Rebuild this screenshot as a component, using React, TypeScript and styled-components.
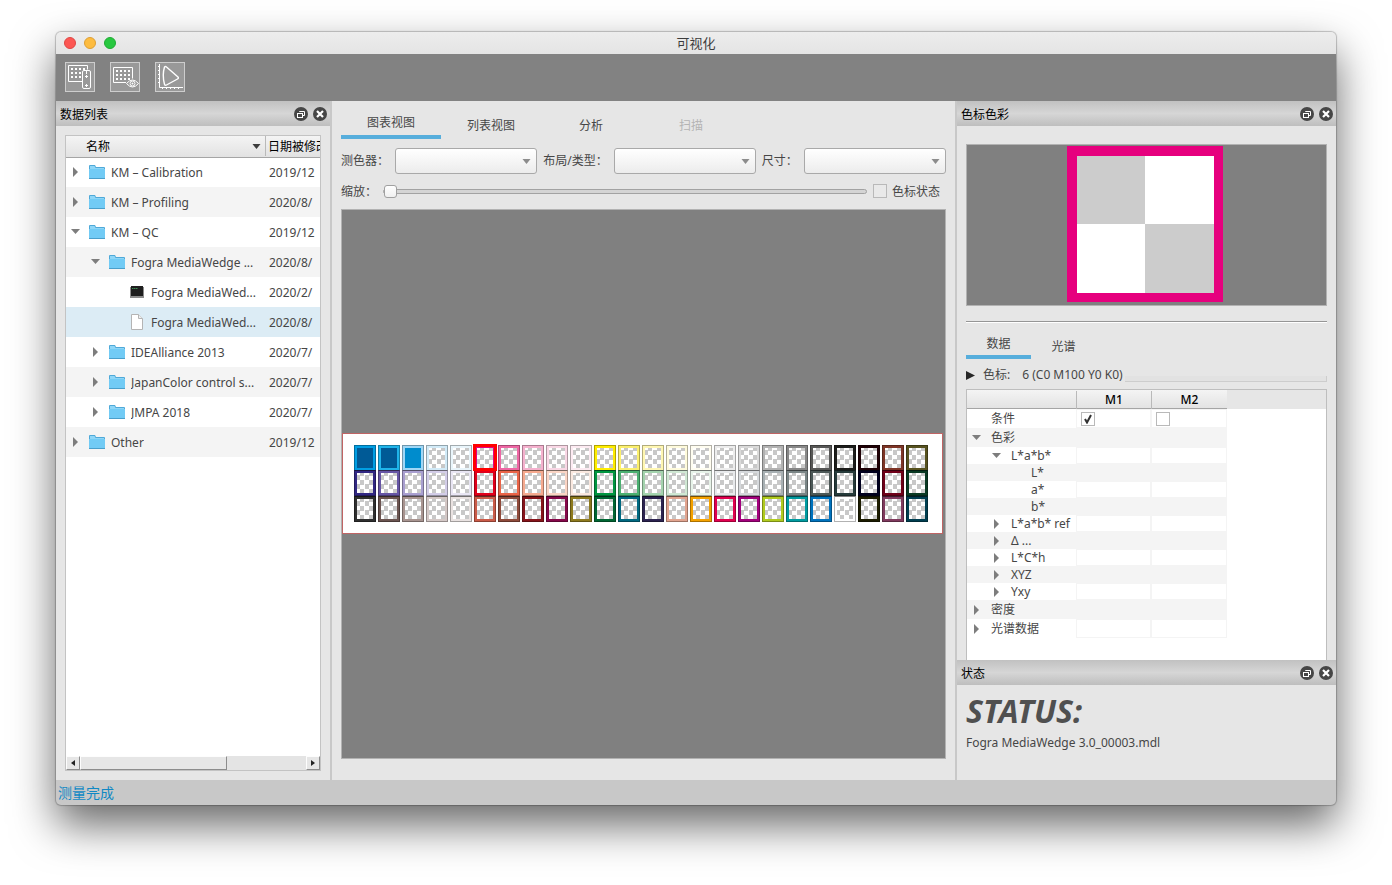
import React from 'react';
import styled, { createGlobalStyle, css } from 'styled-components';

const GlobalStyle = createGlobalStyle`
  * { box-sizing: border-box; }
  html, body { margin: 0; background: #fff; }
  body, button, select, input {
    font-family: "Noto Sans", "Noto Sans CJK SC", sans-serif;
    font-size: 12px;
    line-height: 16px;
    color: #464646;
  }
  button { padding: 0; border: 0; background: none; }
`;

const Page = styled.div`
  display: flex;
  min-height: 100vh;
  padding: 32px 56px 80px;
  overflow: hidden;
`;

const Window = styled.main`
  flex: 1;
  min-width: 0;
  display: flex;
  flex-direction: column;
  border-radius: 5px;
  background: #c8c8c8;
  box-shadow: 0 0 1px 1px rgba(0, 0, 0, 0.22), 0 20px 44px rgba(0, 0, 0, 0.6);
`;

const TitleBar = styled.header`
  display: grid;
  grid-template-columns: 1fr auto 1fr;
  align-items: center;
  height: 22px;
  padding: 0 8px;
  border-radius: 5px 5px 0 0;
  background: linear-gradient(#ededed, #e4e4e4);
`;

const Lights = styled.div`
  display: flex;
  gap: 8px;
`;

const Light = styled.button<{ $color: string; $edge: string }>`
  width: 12px;
  height: 12px;
  border: 1px solid ${(p) => p.$edge};
  border-radius: 50%;
  background: ${(p) => p.$color};
`;

const WindowTitle = styled.h1`
  margin: 0;
  font-size: 13px;
  line-height: 18px;
  font-weight: 400;
  color: #3c3c3c;
`;

const Toolbar = styled.nav`
  display: flex;
  gap: 15px;
  align-items: center;
  height: 47px;
  padding: 0 9px 2px;
  background: #828282;
`;

const ToolButton = styled.button`
  width: 30px;
  height: 30px;
  border: 1px solid #cdcdcd;
  background: #999;
  svg { display: block; }
`;

const Body = styled.div`
  flex: 1;
  display: grid;
  grid-template-columns: 274px minmax(0, 1fr) 379px;
  gap: 2px;
`;

const Column = styled.div`
  display: flex;
  flex-direction: column;
  min-width: 0;
  background: #e6e6e6;
`;

const DockHeader = styled.div`
  display: flex;
  align-items: center;
  gap: 5px;
  height: 25px;
  padding: 0 3px 0 4px;
  background: linear-gradient(#c1c1c1, #d6d6d6 50%, #bebebe);
`;

const DockTitle = styled.h2`
  flex: 1;
  margin: 0;
  padding-top: 2px;
  font-size: 12px;
  line-height: 16px;
  font-weight: 400;
  color: #000;
`;

const DockButton = styled.button`
  width: 14px;
  height: 14px;
  svg { display: block; }
`;

const LeftBody = styled.div`
  flex: 1;
  display: flex;
  padding: 9px;
`;

const TreeFrame = styled.div`
  flex: 1;
  min-width: 0;
  display: flex;
  flex-direction: column;
  border: 1px solid #c3c3c3;
  background: #fff;
`;

const TreeViewport = styled.div`
  flex: 1;
  overflow: hidden;
`;

const TreeTable = styled.table`
  width: 440px;
  table-layout: fixed;
  border-collapse: collapse;
  th, td {
    padding: 0;
    white-space: nowrap;
  }
`;

const TreeHead = styled.th<{ $width?: number }>`
  height: 21px;
  ${(p) => p.$width && `width: ${p.$width}px;`}
  border-bottom: 1px solid #a5a5a5;
  background: linear-gradient(#f4f4f4, #e2e2e2);
  font-weight: 400;
  color: #000;
  text-align: left;
`;

const HeadInner = styled.div<{ $divided?: boolean }>`
  display: flex;
  align-items: center;
  justify-content: space-between;
  height: 20px;
  padding: ${(p) => (p.$divided ? '0 2px' : '0 4px 0 20px')};
  border-left: ${(p) => (p.$divided ? 1 : 0)}px solid #b9b9b9;
  span { padding-top: 2px; }
`;

const TreeRow = styled.tr<{ $selected?: boolean }>`
  height: 30px;
  background: #fff;
  &:nth-child(even) { background: #f4f4f4; }
  ${(p) => p.$selected && css`&&:nth-child(n) { background: #dcecf5; }`}
`;

const NameInner = styled.div<{ $level: number }>`
  display: flex;
  align-items: center;
  gap: 6px;
  padding: 0 4px 0 ${(p) => p.$level * 20 + 3}px;
  svg { flex: none; }
  svg + svg { margin-left: 1px; }
  span {
    padding-top: 2px;
    overflow: hidden;
    text-overflow: ellipsis;
  }
`;

const DateCell = styled.td`
  && { padding: 2px 0 0 4px; }
`;

const ScrollBar = styled.div`
  display: flex;
  height: 14px;
  background: #e4e4e4;
`;

const Bevel = css`
  border: 1px solid;
  border-color: #fdfdfd #8c8c8c #8c8c8c #fdfdfd;
  background: #e6e6e6;
`;

const ScrollButton = styled.button`
  ${Bevel}
  display: grid;
  place-items: center;
  width: 14px;
  height: 14px;
`;

const ScrollTrack = styled.div`
  flex: 1;
`;

const ScrollThumb = styled.div`
  ${Bevel}
  width: 65%;
  height: 14px;
`;

const Center = styled(Column)`
  padding: 0 9px 21px;
`;

const Tabs = styled.div<{ $height: number }>`
  display: flex;
  height: ${(p) => p.$height}px;
`;

const Tab = styled.button<{ $active?: boolean; $width: number }>`
  width: ${(p) => p.$width}px;
  padding-top: ${(p) => (p.$active ? 9 : 11)}px;
  border-bottom: ${(p) => (p.$active ? 4 : 0)}px solid #57aedc;
  color: #464646;
  &:disabled { color: #b4b4b4; }
`;

const FieldRow = styled.div`
  display: flex;
  align-items: center;
  gap: 6px;
  margin-top: 9px;
`;

const SelectBox = styled.div`
  position: relative;
  flex: 1;
  height: 26px;
  svg {
    position: absolute;
    right: 6px;
    top: 11px;
    pointer-events: none;
  }
`;

const Select = styled.select`
  display: block;
  width: 100%;
  height: 26px;
  appearance: none;
  border: 1px solid #a9a9a9;
  border-radius: 3px;
  background: linear-gradient(#fff, #ececec);
`;

const ZoomRow = styled(FieldRow)`
  height: 14px;
  margin: 10px 0 11px;
  padding-right: 6px;
  span { display: block; padding-top: 2px; }
`;

const Slider = styled.input`
  flex: 1;
  min-width: 0;
  height: 14px;
  margin: 0;
  appearance: none;
  background: none;
  &::-webkit-slider-runnable-track {
    height: 5px;
    border: 1px solid #a2a2a2;
    border-radius: 3px;
    background: #d4d4d4;
  }
  &::-webkit-slider-thumb {
    appearance: none;
    width: 13px;
    height: 13px;
    margin-top: -5px;
    border: 1px solid #a0a0a0;
    border-radius: 3px;
    background: linear-gradient(#fff, #f0f0f0);
  }
`;

const CheckLabel = styled.label`
  display: flex;
  align-items: center;
  gap: 5px;
`;

const Check = styled.input<{ $bg?: string }>`
  flex: none;
  width: 14px;
  height: 14px;
  margin: 0;
  appearance: none;
  border: 1px solid #b9b9b9;
  background: ${(p) => p.$bg || '#e9e9e9'};
`;

const Canvas = styled.section`
  flex: 1;
  display: flex;
  align-items: center;
  padding-bottom: 2px;
  border: 1px solid #b2b2b2;
  background: #808080;
`;

const Strip = styled.div`
  padding: 11px 14px 11px 11px;
  border: 1px solid #c06464;
  background: #fff;
`;

const PatchGrid = styled.div`
  display: grid;
  grid-template-columns: repeat(24, 22px);
  grid-template-rows: 25px 26px 26px;
  column-gap: 2px;
`;

const checker = 'repeating-conic-gradient(#fff 0 25%, #c8c8c8 0 50%) 3px -2px / 9px 9px';

const Patch = styled.div<{ $color: string; $fill?: string; $top: boolean; $selected?: boolean }>`
  display: flex;
  padding: 2px;
  border: 1px solid rgba(0, 0, 0, 0.3);
  border-top-color: rgba(0, 0, 0, ${(p) => (p.$top ? 0.3 : 0.5)});
  border-bottom-width: ${(p) => (p.$top ? 0 : 1)}px;
  background: ${(p) => p.$color};
  &::before {
    content: "";
    flex: 1;
    background: ${(p) => p.$fill || checker};
  }
  ${(p) => p.$selected && css`outline: 3px solid #f00; outline-offset: -2px; z-index: 1;`}
`;

const SwatchBody = styled.div`
  flex: 1;
  display: flex;
  flex-direction: column;
  padding: 18px 9px 0;
`;

const Swatch = styled.div`
  display: flex;
  justify-content: center;
  height: 162px;
  padding: 1px;
  border: 1px solid #b2b2b2;
  background: #808080;
`;

const SwatchColor = styled.div`
  width: 156px;
  height: 156px;
  margin-right: 4px;
  border: 10px solid #e6007e;
  border-right-width: 9px;
  border-bottom-width: 9px;
  background: repeating-conic-gradient(#fff 0 25%, #ccc 0 50%) -1px -1px / 138px 138px;
`;

const Divider = styled.hr`
  width: 100%;
  height: 2px;
  margin: 15px 0 0;
  border: 0;
  border-top: 1px solid #969696;
  border-bottom: 1px solid #fff;
`;

const PatchInfo = styled.div`
  display: flex;
  align-items: center;
  height: 30px;
  padding-top: 2px;
  span { margin-left: 8px; }
  output { margin: 0 2px 0 12px; }
`;

const Groove = styled.div`
  flex: 1;
  height: 6px;
  margin-top: 8px;
  border: 1px solid #cdcdcd;
  border-width: 0 1px 1px 0;
  background: #e2e2e2;
`;

const DataFrame = styled.div`
  flex: 1;
  border: 1px solid #bebebe;
  border-bottom: 0;
  background: linear-gradient(#e6e6e6 19px, #fff 19px);
`;

const DataTable = styled.table`
  width: 260px;
  table-layout: fixed;
  border-collapse: collapse;
  td, th { padding: 0; }
`;

const DataHead = styled.th<{ $width: number }>`
  width: ${(p) => p.$width}px;
  height: 19px;
  background: linear-gradient(#f4f4f4, #e2e2e2);
  box-shadow: inset 0 -1px #a5a5a5;
  font-weight: 500;
  line-height: 18px;
  color: #000;
  > div {
    height: 18px;
    border-left: 1px solid #b9b9b9;
  }
  &:first-child > div { border-left: 0; }
`;

const DataRow = styled.tr<{ $tall?: boolean }>`
  height: ${(p) => (p.$tall ? 19 : 17)}px;
  background: #fff;
  &:nth-child(even) { background: #f4f4f4; }
  td + td { box-shadow: inset 0 0 0 1px #f4f4f4; }
`;

const DataName = styled.div<{ $level: number }>`
  display: flex;
  align-items: center;
  height: 17px;
  padding-left: ${(p) => p.$level * 20 + 3}px;
  svg { flex: none; }
  span {
    flex: 1;
    margin-left: 4px;
    padding-left: 4px;
  }
`;

const CellCheck = styled.label`
  position: relative;
  display: block;
  width: 14px;
  height: 14px;
  margin-left: 5px;
  svg {
    position: absolute;
    left: 3px;
    top: 2px;
  }
`;

const StatusBody = styled.div`
  height: 95px;
  padding: 10px 9px;
`;

const StatusHeading = styled.h2`
  margin: 0 0 8px;
  font-size: 32px;
  line-height: 32px;
  font-weight: 700;
  font-style: italic;
  color: #505050;
`;

const StatusText = styled.p`
  margin: 0;
`;

const StatusBar = styled.footer`
  height: 25px;
  padding: 0 2px;
  border-radius: 0 0 5px 5px;
  font-size: 14px;
  line-height: 25px;
  color: #1088c4;
`;

type ArrowKind = 'open' | 'closed' | 'none';

const Arrow = ({ kind }: { kind: ArrowKind }) => (
  <svg width="13" height="10" viewBox="0 0 13 10" fill="#7d7d7d">
    {kind === 'open' && <path d="M2 2h9L6.500 7z" />}
    {kind === 'closed' && <path d="M4 0v10l5-5z" />}
  </svg>
);

const DownArrow = ({ color }: { color: string }) => (
  <svg width="9" height="5" viewBox="0 0 9 5" fill={color}><path d="M0.500 0h8L4.500 5z" /></svg>
);

const FolderIcon = () => (
  <svg width="16" height="14" viewBox="0 0 16 14">
    <path d="M0 1q0-1 1-1h5l1 2h8q1 0 1 1v10H0z" fill="#4fa9d8" />
    <path d="M1 1h4.500l1 2H15v1H1z" fill="#8fd6f7" />
    <path d="M0 4h16v9H0z" fill="#72cbf5" />
    <path d="M0 13h16v1H0z" fill="#4a9fcb" />
  </svg>
);

const TerminalIcon = () => (
  <svg width="16" height="16" viewBox="0 0 16 16">
    <path d="M1 3h14v11H1z" fill="#8c8c8c" />
    <path d="M2 2h12v10H2z" fill="#1e1e1e" />
    <path d="M3 4.500h6" stroke="#3f8f56" strokeDasharray="1.500 .5" />
  </svg>
);

const FileIcon = () => (
  <svg width="16" height="16" viewBox="0 0 16 16">
    <path d="M2.500.5h7l4 4v11h-11z" fill="#fff" stroke="#b4b4b4" />
    <path d="M9.500.5v4h4" fill="#eee" stroke="#b4b4b4" />
  </svg>
);

const dots = (x: number, y: number) =>
  Array.from({ length: 12 }, (_, i) => (
    <rect key={i} x={x + (i % 4) * 4} y={y + Math.floor(i / 4) * 4} width="2" height="2" fill="#fff" />
  ));

const ScanChartIcon = () => (
  <svg width="28" height="28" viewBox="0 0 28 28" fill="none" stroke="#fff">
    <path d="M16 18.500H2.500v-16h19v4" />
    <g stroke="none">{dots(5, 5)}</g>
    <rect x="16.500" y="7.500" width="8" height="18" rx="1.500" fill="#999" />
    <path d="M20.500 7v4M20.500 12v3M19 13.500h3M20.500 21v3M19 22.500h3" />
  </svg>
);

const ViewChartIcon = () => (
  <svg width="28" height="28" viewBox="0 0 28 28" fill="none" stroke="#fff">
    <path d="M15 19.500H2.500v-15h19v11" />
    <g stroke="none">{dots(5, 7)}</g>
    <path d="M15.500 20.500q6-7 12 0q-6 7-12 0z" fill="#999" />
    <circle cx="21.500" cy="20.500" r="2.500" />
    <circle cx="21.500" cy="20.500" r="1" fill="#fff" stroke="none" />
  </svg>
);

const GamutIcon = () => (
  <svg width="28" height="28" viewBox="0 0 28 28" fill="none" stroke="#fff">
    <path d="M3.500 1v23.500H27" />
    <path d="M2.500 3v20" strokeDasharray="1 3" />
    <path d="M6 25.500h20" strokeDasharray="1 3" />
    <path d="M8.500 4q1-1 2 0L22 14q1 1-.5 2L10.500 22q-1.500.8-2-.8Q6 12 8.500 4z" strokeWidth="1.400" />
  </svg>
);

const FloatIcon = () => (
  <svg width="14" height="14" viewBox="0 0 14 14" fill="none" stroke="#fff">
    <circle cx="7" cy="7" r="7" fill="#464646" stroke="none" />
    <path d="M5.500 5V4.500h5v4H9" />
    <rect x="3.500" y="6.500" width="5" height="4" />
  </svg>
);

const CloseIcon = () => (
  <svg width="14" height="14" viewBox="0 0 14 14">
    <circle cx="7" cy="7" r="7" fill="#464646" />
    <path d="M4 4l6 6M10 4l-6 6" stroke="#fff" strokeWidth="2.200" />
  </svg>
);

const CheckMark = () => (
  <svg width="9" height="10" viewBox="0 0 9 10" fill="none" stroke="#323232" strokeWidth="2">
    <path d="M1 5l2 3.500L7 1" />
  </svg>
);

interface TreeItem {
  name: string;
  date: string;
  level: number;
  arrow: ArrowKind;
  icon?: 'terminal' | 'file';
  selected?: boolean;
}

const treeItems: TreeItem[] = [
  { name: 'KM – Calibration', date: '2019/12', level: 0, arrow: 'closed' },
  { name: 'KM – Profiling', date: '2020/8/', level: 0, arrow: 'closed' },
  { name: 'KM – QC', date: '2019/12', level: 0, arrow: 'open' },
  { name: 'Fogra MediaWedge ...', date: '2020/8/', level: 1, arrow: 'open' },
  { name: 'Fogra MediaWed...', date: '2020/2/', level: 2, arrow: 'none', icon: 'terminal' },
  { name: 'Fogra MediaWed...', date: '2020/8/', level: 2, arrow: 'none', icon: 'file', selected: true },
  { name: 'IDEAlliance 2013', date: '2020/7/', level: 1, arrow: 'closed' },
  { name: 'JapanColor control s...', date: '2020/7/', level: 1, arrow: 'closed' },
  { name: 'JMPA 2018', date: '2020/7/', level: 1, arrow: 'closed' },
  { name: 'Other', date: '2019/12', level: 0, arrow: 'closed' },
];

const dataItems: { name: string; level: number; arrow: ArrowKind; tall?: boolean; checks?: boolean }[] = [
  { name: '条件', level: 0, arrow: 'none', tall: true, checks: true },
  { name: '色彩', level: 0, arrow: 'open', tall: true },
  { name: 'L*a*b*', level: 1, arrow: 'open' },
  { name: 'L*', level: 2, arrow: 'none' },
  { name: 'a*', level: 2, arrow: 'none' },
  { name: 'b*', level: 2, arrow: 'none' },
  { name: 'L*a*b* ref', level: 1, arrow: 'closed' },
  { name: 'Δ ...', level: 1, arrow: 'closed' },
  { name: 'L*C*h', level: 1, arrow: 'closed' },
  { name: 'XYZ', level: 1, arrow: 'closed' },
  { name: 'Yxy', level: 1, arrow: 'closed' },
  { name: '密度', level: 0, arrow: 'closed', tall: true },
  { name: '光谱数据', level: 0, arrow: 'closed', tall: true },
];

const patchRows = [
  ['#009ee3', '#1fb4ea', '#9fd7f6', '#d2ebf8', '#e9f5fb', '#e6007e', '#ee66a4', '#f5b1ce', '#fad8e6', '#fdebf2', '#ffed00', '#fcf06e', '#fff7b2', '#fffbdc', '#fffdf0', '#ededed', '#dadada', '#b2b2b2', '#878787', '#575756', '#1d1d1b', '#1e0005', '#7e3526', '#57521f'],
  ['#312783', '#6655a5', '#a99fd0', '#d3cde8', '#e9e6f4', '#e2001a', '#ea6447', '#f6aa8f', '#fbd5c5', '#fbe9e0', '#009640', '#4bb071', '#a4d3ae', '#d0e8d4', '#e7f3e9', '#e8eaec', '#d6d9dc', '#a8b0b3', '#7a8586', '#4c5857', '#263b3b', '#00001e', '#6f0019', '#0a3a24'],
  ['#2f2f2f', '#6b5450', '#a89490', '#d4c8c6', '#e9e2e1', '#cb5b48', '#8f4a3a', '#87141a', '#86084a', '#8e7a1e', '#006633', '#006880', '#2c2350', '#e2a48f', '#f5a200', '#e2004f', '#a3007c', '#b0cb1f', '#009ba0', '#0073be', '#fff', '#1c1c00', '#803a5e', '#003e50'],
];

const solidFills = ['#005a96', '#005a96', '#008ccd'];

const DockBar = ({ title }: { title: string }) => (
  <DockHeader>
    <DockTitle>{title}</DockTitle>
    <DockButton aria-label="浮动"><FloatIcon /></DockButton>
    <DockButton aria-label="关闭"><CloseIcon /></DockButton>
  </DockHeader>
);

const Combo = ({ id }: { id: string }) => (
  <SelectBox>
    <Select id={id}><option /></Select>
    <DownArrow color="#8c8c8c" />
  </SelectBox>
);

const FileTree = () => (
  <TreeFrame>
    <TreeViewport>
      <TreeTable>
        <thead>
          <tr>
            <TreeHead $width={199}><HeadInner><span>名称</span><DownArrow color="#3c3c3c" /></HeadInner></TreeHead>
            <TreeHead><HeadInner $divided><span>日期被修改</span></HeadInner></TreeHead>
          </tr>
        </thead>
        <tbody>
          {treeItems.map((item, i) => (
            <TreeRow key={i} $selected={item.selected}>
              <td>
                <NameInner $level={item.level}>
                  <Arrow kind={item.arrow} />
                  {item.icon === 'terminal' ? <TerminalIcon /> : item.icon === 'file' ? <FileIcon /> : <FolderIcon />}
                  <span>{item.name}</span>
                </NameInner>
              </td>
              <DateCell>{item.date}</DateCell>
            </TreeRow>
          ))}
        </tbody>
      </TreeTable>
    </TreeViewport>
    <ScrollBar>
      <ScrollButton aria-label="向左">
        <svg width="4" height="6" viewBox="0 0 4 6"><path d="M4 0v6L0 3z" fill="#222" /></svg>
      </ScrollButton>
      <ScrollTrack><ScrollThumb /></ScrollTrack>
      <ScrollButton aria-label="向右">
        <svg width="4" height="6" viewBox="0 0 4 6"><path d="M0 0v6l4-3z" fill="#222" /></svg>
      </ScrollButton>
    </ScrollBar>
  </TreeFrame>
);

const ColorChart = () => (
  <Canvas>
    <Strip>
      <PatchGrid>
        {patchRows.map((row, r) =>
          row.map((color, c) => (
            <Patch
              key={`${r}-${c}`}
              $color={color}
              $fill={r === 0 ? solidFills[c] : undefined}
              $top={r === 0}
              $selected={r === 0 && c === 5}
            />
          )),
        )}
      </PatchGrid>
    </Strip>
  </Canvas>
);

const MeasurementTable = () => (
  <DataFrame>
    <DataTable>
      <thead>
        <tr>
          <DataHead $width={109}><div /></DataHead>
          <DataHead $width={75}><div>M1</div></DataHead>
          <DataHead $width={76}><div>M2</div></DataHead>
        </tr>
      </thead>
      <tbody>
        {dataItems.map((item) => (
          <DataRow key={item.name} $tall={item.tall}>
            <td>
              <DataName $level={item.level}><Arrow kind={item.arrow} /><span>{item.name}</span></DataName>
            </td>
            <td>
              {item.checks && (
                <CellCheck><Check type="checkbox" aria-label="M1" $bg="#fff" defaultChecked /><CheckMark /></CellCheck>
              )}
            </td>
            <td>
              {item.checks && <CellCheck><Check type="checkbox" aria-label="M2" $bg="#fff" /></CellCheck>}
            </td>
          </DataRow>
        ))}
      </tbody>
    </DataTable>
  </DataFrame>
);

export default function App() {
  return (
    <>
      <GlobalStyle />
      <Page>
        <Window>
          <TitleBar>
            <Lights>
              <Light $color="#fc5753" $edge="#df4744" aria-label="关闭" />
              <Light $color="#fdbc40" $edge="#de9f34" aria-label="最小化" />
              <Light $color="#28c840" $edge="#20ab34" aria-label="缩放" />
            </Lights>
            <WindowTitle>可视化</WindowTitle>
          </TitleBar>
          <Toolbar>
            <ToolButton aria-label="测量"><ScanChartIcon /></ToolButton>
            <ToolButton aria-label="查看"><ViewChartIcon /></ToolButton>
            <ToolButton aria-label="色域"><GamutIcon /></ToolButton>
          </Toolbar>
          <Body>
            <Column>
              <DockBar title="数据列表" />
              <LeftBody><FileTree /></LeftBody>
            </Column>
            <Center>
              <Tabs $height={38}>
                <Tab $active $width={100}>图表视图</Tab>
                <Tab $width={100}>列表视图</Tab>
                <Tab $width={100}>分析</Tab>
                <Tab $width={100} disabled>扫描</Tab>
              </Tabs>
              <FieldRow>
                <label htmlFor="device">测色器：</label>
                <Combo id="device" />
                <label htmlFor="layout">布局/类型：</label>
                <Combo id="layout" />
                <label htmlFor="size">尺寸：</label>
                <Combo id="size" />
              </FieldRow>
              <ZoomRow>
                <label htmlFor="zoom"><span>缩放：</span></label>
                <Slider id="zoom" type="range" defaultValue={0} />
                <CheckLabel><Check type="checkbox" /><span>色标状态</span></CheckLabel>
              </ZoomRow>
              <ColorChart />
            </Center>
            <Column>
              <DockBar title="色标色彩" />
              <SwatchBody>
                <Swatch><SwatchColor /></Swatch>
                <Divider />
                <Tabs $height={36}>
                  <Tab $active $width={65}>数据</Tab>
                  <Tab $width={65}>光谱</Tab>
                </Tabs>
                <PatchInfo>
                  <svg width="9" height="9" viewBox="0 0 9 9"><path d="M0 0v9l9-4.500z" fill="#282828" /></svg>
                  <span>色标:</span>
                  <output>6 (C0 M100 Y0 K0)</output>
                  <Groove />
                </PatchInfo>
                <MeasurementTable />
              </SwatchBody>
              <DockBar title="状态" />
              <StatusBody>
                <StatusHeading>STATUS:</StatusHeading>
                <StatusText>Fogra MediaWedge 3.0_00003.mdl</StatusText>
              </StatusBody>
            </Column>
          </Body>
          <StatusBar>测量完成</StatusBar>
        </Window>
      </Page>
    </>
  );
}
